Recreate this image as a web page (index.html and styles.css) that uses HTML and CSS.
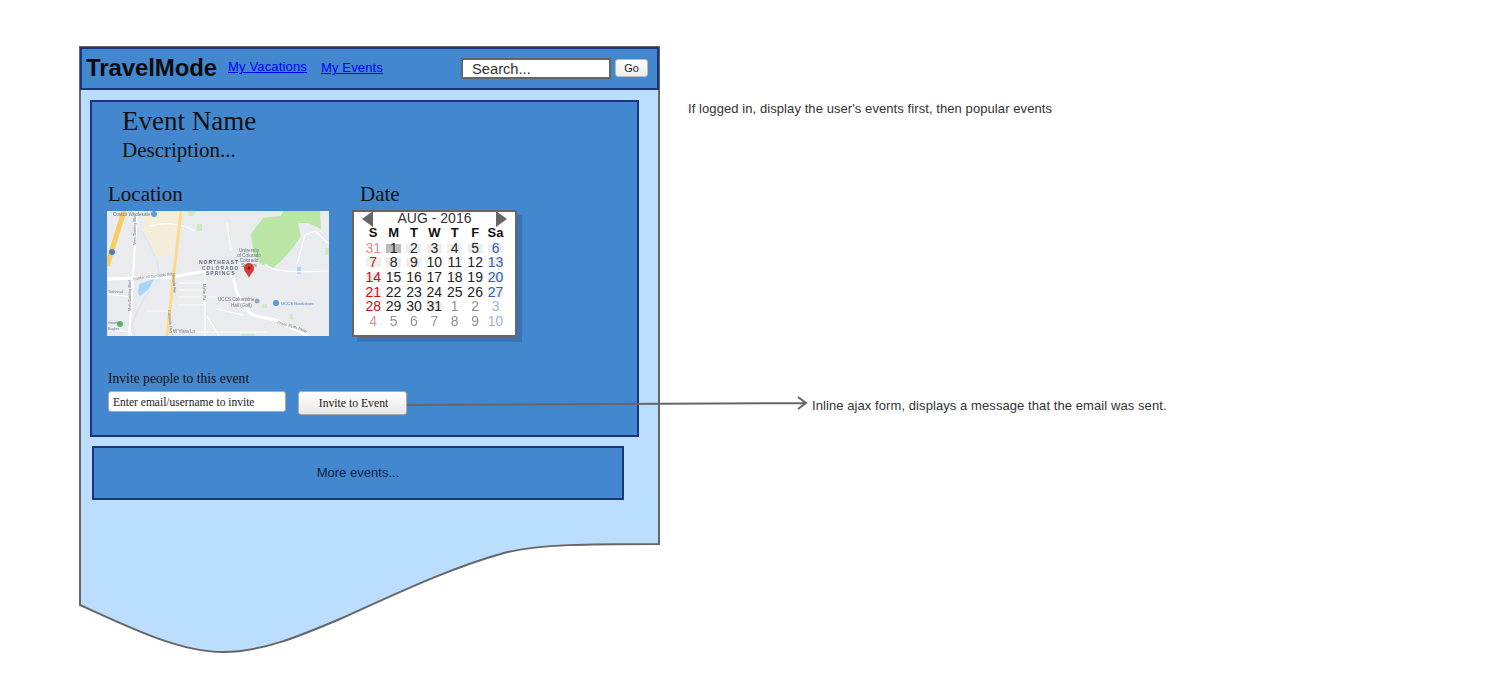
FILE: index.html
```html
<!DOCTYPE html>
<html lang="en">
<head>
<meta charset="utf-8">
<title>TravelMode wireframe</title>
<link rel="stylesheet" href="styles.css">
</head>
<body>
<main class="canvas">
  <svg class="sheet" width="600" height="640" viewBox="0 0 600 640" aria-hidden="true">
    <path class="sheet-shape" d="M1 1H580V498C511 498 460 498 425 507C371 522 321 546 261 573C221 590 183 606 144 606C101 606 51 582 1 559Z"/>
  </svg>

  <section class="wire">
    <header class="topbar">
      <h1 class="brand">TravelMode</h1>
      <nav class="nav">
        <a class="nav-link" href="#">My Vacations</a>
        <a class="nav-link nav-link-low" href="#">My Events</a>
      </nav>
      <form class="search">
        <input class="search-input" value="Search...">
        <button class="go" type="button">Go</button>
      </form>
    </header>

    <article class="event">
      <h2 class="event-name">Event Name</h2>
      <p class="event-desc">Description...</p>
      <div class="details">
        <div class="loc">
          <h3 class="label">Location</h3>
          <svg class="map" width="222" height="125" viewBox="0 0 222 125" role="img" aria-label="Map">
            <rect width="222" height="125" fill="#e9ebee"/>
            <g class="map-soft">
              <path fill="#f6edd8" d="M37 3 73 0 66 42 50 47 37 20Z"/>
              <path fill="#b9e6a5" d="M144 23 156 7 174 5 176 0H213L214 18 201 12 191 12 194 25 186 37 174 50 166 57 153 53 146 40Z"/>
              <path fill="#cdeac0" d="M80 0h9l-3 5h-4zM90 13h5v7h-5zM155 93h5v4h-5zM183 103h3v5h-3zM134 123h14v2h-14zM218 37h4v7h-4z"/>
              <path fill="#a9d5f5" d="M31 83 32 73 47 68 42 78 33 85Z"/>
              <rect fill="#a9d5f5" x="190" y="56" width="4" height="7"/>
              <g fill="none" stroke="#fff">
                <path stroke-width="3" d="M0 68 63 66C85 63 100 59 111 58 120 58 124 60 127 70 130 85 136 96 144 103 155 108 165 107 171 110L201 125"/>
                <path stroke-width="2" d="M30 0 28 33 25 83 22 125"/>
                <path stroke-width="1.2" d="M43 15C55 11 75 12 88 20M72 72H98M72 79H98M72 86H110M72 94H98M98 60V125M63 121H160M110 98 136 104M100 105 112 125M120 12 124 40M158 53C165 60 178 62 222 60M190 53 198 24 208 20 222 33M0 83 25 86M40 100 62 100M4 118C14 122 22 118 25 124"/>
                <path stroke-width=".8" stroke="#cfe2f2" d="M35 20 50 50 53 67 37 87 25 113 28 125"/>
              </g>
              <path fill="none" stroke="#f8cc62" stroke-width="5" d="M17 0 0 55"/>
              <path fill="none" stroke="#fbdc85" stroke-width="3" d="M74 0 60 125"/>
              <circle cx="5" cy="41" r="3" fill="#4a7fc4"/>
              <circle cx="47" cy="3" r="3" fill="#5b9bd5"/>
              <circle cx="150" cy="90" r="2.5" fill="#8faabb"/>
              <circle cx="169" cy="92" r="3" fill="#5b9bd5"/>
              <circle cx="13" cy="113" r="3" fill="#55b96b"/>
              <text class="map-text" x="6" y="5">Costco Wholesale</text>
              <text class="map-text map-small" x="1" y="82">Technical</text>
              <text class="map-text map-small" x="1" y="113">Growth</text>
              <text class="map-text map-small" x="1" y="119">Eagles</text>
              <text class="map-road" transform="translate(26 69) rotate(-7)">Garden of the Gods Rd</text>
              <text class="map-road" transform="translate(29 34) rotate(-90)">Mark Dabling Blvd</text>
              <text class="map-road" transform="translate(24 100) rotate(-90)">Mark Dabling Blvd</text>
              <text class="map-road" transform="translate(65 62) rotate(85)">Nevada Ave</text>
              <text class="map-road" transform="translate(61 99) rotate(85)">Cascade Hwy</text>
              <text class="map-road" transform="translate(96 73) rotate(90)">Mallor Rd</text>
              <text class="map-road" transform="translate(170 112) rotate(18)">Austin Bluffs Pkwy</text>
              <text class="map-text map-dark" x="92" y="53">NORTHEAST</text>
              <text class="map-text map-dark" x="95" y="58.5">COLORADO</text>
              <text class="map-text map-dark" x="99" y="64">SPRINGS</text>
              <text class="map-text map-mid" x="142" y="41">University</text>
              <text class="map-text map-mid" x="142" y="46">of Colorado</text>
              <text class="map-text map-mid" x="142" y="51">Colorado</text>
              <text class="map-text map-mid" x="142" y="56">Springs</text>
              <text class="map-text" x="111" y="90">UCCS Columbine</text>
              <text class="map-text" x="124" y="96">Hall (Golf)</text>
              <text class="map-text map-blue" x="174" y="94">UCCS Bookstore</text>
              <text class="map-text" x="66" y="122">W Vista Ln</text>
            </g>
            <path fill="#dc3a30" d="M142 52C139 52 137 54.500 137 57.500 137 61 140.500 62 142 67 143.500 62 147 61 147 57.500 147 54.500 145 52 142 52Z"/>
            <circle cx="142" cy="57" r="1.500" fill="#7c1512"/>
          </svg>
        </div>
        <div class="date">
          <h3 class="label label-date">Date</h3>
          <div class="cal">
            <div class="cal-head">
              <span class="tri tri-left"></span>
              <span class="cal-title">AUG - 2016</span>
              <span class="tri tri-right"></span>
            </div>
            <div class="cal-grid">
              <b>S</b><b>M</b><b>T</b><b>W</b><b>T</b><b>F</b><b>Sa</b>
              <span class="sun dim">31</span><span class="sel">1</span><span class="mk">2</span><span class="mk">3</span><span class="mk">4</span><span class="mk">5</span><span class="sat mk">6</span>
              <span class="sun mk">7</span><span class="mk">8</span><span class="mk">9</span><span>10</span><span>11</span><span>12</span><span class="sat mk">13</span>
              <span class="sun mk">14</span><span>15</span><span>16</span><span>17</span><span>18</span><span>19</span><span class="sat mk">20</span>
              <span class="sun mk">21</span><span>22</span><span>23</span><span>24</span><span>25</span><span>26</span><span class="sat mk">27</span>
              <span class="sun">28</span><span>29</span><span>30</span><span class="mk">31</span><span class="dim">1</span><span class="dim">2</span><span class="sat dim">3</span>
              <span class="sun dim">4</span><span class="dim">5</span><span class="dim">6</span><span class="dim">7</span><span class="dim">8</span><span class="dim">9</span><span class="sat dim">10</span>
            </div>
          </div>
        </div>
      </div>
      <p class="invite-label">Invite people to this event</p>
      <form class="invite">
        <input class="invite-input" value="Enter email/username to invite">
        <button class="invite-btn" type="button">Invite to Event</button>
      </form>
    </article>

    <div class="more">More events...</div>
  </section>

  <svg class="arrow" width="410" height="20" viewBox="0 0 410 20" aria-hidden="true">
    <path class="arrow-line" d="M0 13 399 11M391 5 399 11 391 17"/>
  </svg>
  <p class="note note-top">If logged in, display the user's events first, then popular events</p>
  <p class="note note-arrow">Inline ajax form, displays a message that the email was sent.</p>
</main>
</body>
</html>
```
FILE: styles.css
```css
* { box-sizing: border-box; }
html, body { margin: 0; padding: 0; background: #fff; }
.canvas { position: relative; width: 1485px; height: 695px; overflow: hidden; }

.sheet { position: absolute; left: 79px; top: 46px; }
.sheet-shape { fill: #bbdeff; stroke: #666; stroke-width: 2; }

.wire { position: absolute; left: 80px; top: 47px; width: 579px; }

.topbar {
  display: flex; align-items: flex-start; height: 43px;
  background: #4387ce; border: 2px solid #1b3383; padding-left: 4px;
}
.brand { margin: 5px 0 0; font: bold 24px/28px "Liberation Sans", sans-serif; letter-spacing: -.1px; color: #0a0a0a; }
.nav { display: flex; align-items: flex-start; margin-left: 11px; gap: 14px; padding-top: 10px; }
.nav-link { font: 13px/16px "Liberation Sans", sans-serif; letter-spacing: .15px; color: #0000ff; }
.nav-link-low { margin-top: 1px; }
.search { display: flex; align-items: flex-start; margin-left: auto; padding: 9px 9px 0 0; gap: 4px; }
.search-input {
  width: 150px; height: 21px; border: 2px solid #666; border-radius: 0; background: #fff;
  padding: 0 0 0 9px; font: 14.7px "Liberation Sans", sans-serif; color: #333; outline: 0;
}
.go {
  width: 33px; height: 18px; margin-top: 1px; padding: 0; border: 1px solid #bbb; border-radius: 3px;
  background: linear-gradient(#fff, #ececec); font: 11px "Liberation Sans", sans-serif; color: #222;
}

.event {
  margin: 10px 0 0 10px; width: 549px; height: 337px; padding: 6px 16px 0;
  background: #4387ce; border: 2px solid #1b3383; color: #111;
  font-family: "Liberation Serif", serif;
}
.event-name { margin: 0 0 0 14px; font: 27px/26px "Liberation Serif", serif; font-weight: 400; }
.event-desc { margin: 3px 0 0 14px; font: 21px/26px "Liberation Serif", serif; }
.details { display: flex; margin: 20px 0 0 -1px; }
.loc { width: 245px; }
.label { margin: 0 0 5px 1px; font: 21px/23px "Liberation Serif", serif; font-weight: 400; }
.label-date { margin-left: 8px; }
.map { display: block; }
.map-soft { filter: blur(.4px); }
.map-text { font: 4.6px "Liberation Sans", sans-serif; fill: #6b7480; }
.map-small { font-size: 3.6px; }
.map-road { font: 3.8px "Liberation Sans", sans-serif; fill: #6b7480; }
.map-dark { font-size: 5px; letter-spacing: 1px; fill: #5a6a85; font-weight: bold; }
.map-mid { text-anchor: middle; }
.map-blue { font-size: 4.3px; fill: #3f7fd0; }

.cal {
  width: 165px; height: 127px; margin-top: -1px; background: #fff; border: 2px solid #666;
  box-shadow: 5px 5px 0 #3a72b4; font-family: "Liberation Sans", sans-serif;
}
.cal-head { display: flex; justify-content: space-between; align-items: center; height: 14px; padding: 0 8px; }
.cal-title { font-size: 14px; line-height: 14px; color: #333; margin-top: -2px; }
.tri { width: 0; height: 0; border-top: 8px solid transparent; border-bottom: 8px solid transparent; }
.tri-left { border-right: 11px solid #666; }
.tri-right { border-left: 11px solid #666; }
.cal-grid {
  display: grid; grid-template-columns: repeat(7, 20.4px); grid-auto-rows: 14.7px;
  margin-left: 9px; font-size: 14px; line-height: 14.7px; text-align: center; color: #222;
}
.cal-grid b { color: #111; font-size: 13px; }
.cal-grid span { background-repeat: no-repeat; background-position: center 3px; background-size: 15px 9px; }
.mk { background-image: linear-gradient(#eee, #eee); }
.sel { background-image: linear-gradient(#bbb, #bbb); }
.sun { color: #cc1111; }
.sat { color: #3b5fb5; }
.dim { opacity: .5; }

.invite-label { margin: 34px 0 0; font-size: 13.6px; line-height: 15px; }
.invite { display: flex; align-items: flex-start; gap: 12px; margin-top: 5px; }
.invite-input {
  width: 178px; height: 21px; padding: 0 0 0 4px; border: 1px solid #aaa; border-radius: 3px;
  background: #fff; font: 11.5px "Liberation Serif", serif; color: #222; outline: 0;
}
.invite-btn {
  width: 109px; height: 24px; padding: 0 0 0 2px; border: 1px solid #aaa; border-radius: 3px;
  background: linear-gradient(#fff, #e8e8e8); font: 11.7px "Liberation Serif", serif; color: #222;
}

.more {
  display: flex; align-items: center; justify-content: center;
  margin: 9px 0 0 12px; width: 532px; height: 54px; padding-bottom: 2px;
  background: #4387ce; border: 2px solid #1b3383;
  font: 13px "Liberation Sans", sans-serif; letter-spacing: .02px; color: #0f2444;
}

.arrow { position: absolute; left: 407px; top: 392px; }
.arrow-line { fill: none; stroke: #666; stroke-width: 2; }
.note { position: absolute; margin: 0; font: 13px/16px "Liberation Sans", sans-serif; letter-spacing: .08px; color: #333; white-space: nowrap; }
.note-top { left: 688px; top: 101px; }
.note-arrow { left: 812px; top: 398px; }
```
